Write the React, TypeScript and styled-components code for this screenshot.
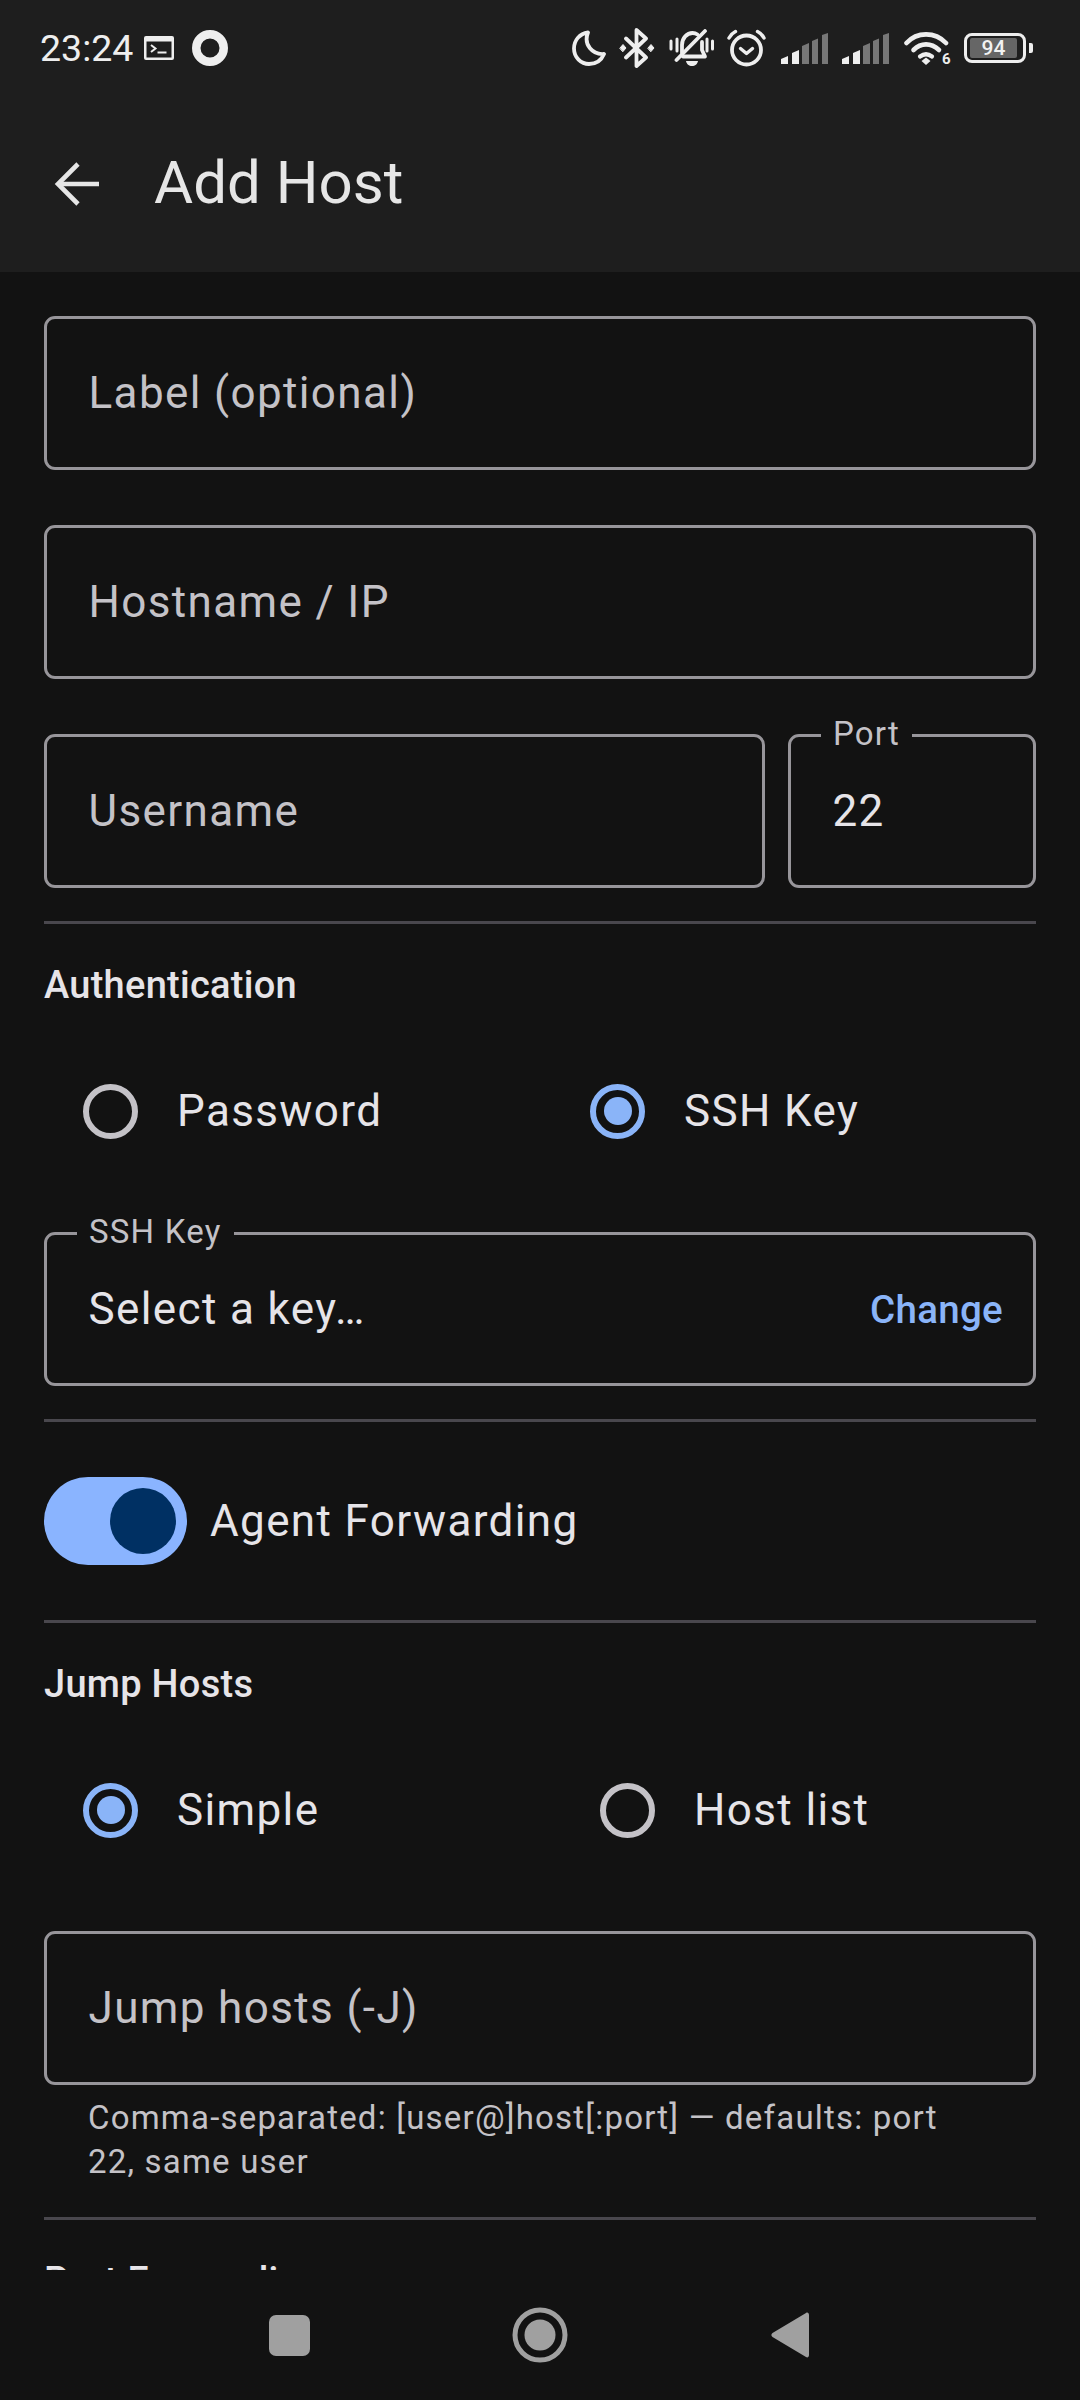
// Add Host screen
import * as React from 'react';
import styled, { createGlobalStyle } from 'styled-components';

const GlobalStyle = createGlobalStyle`
    html, body {
        margin: 0;
        padding: 0;
        background: #121212;
    }
    * {
        box-sizing: border-box;
    }
`

const Screen = styled.div`
    width: 1080px;
    height: 2400px;
    display: flex;
    flex-direction: column;
    background: #121212;
    font-family: Roboto, "Liberation Sans", sans-serif;
    overflow: hidden;
`

const Header = styled.header`
    height: 272px;
    flex: none;
    background: #1e1e1e;
    color: #e6e6e6;
`

const StatusBar = styled.div`
    height: 96px;
    display: flex;
    align-items: center;
    justify-content: space-between;
    padding: 0 47px 0 40px;
`

const StatusLeft = styled.div`
    display: flex;
    align-items: center;
`

const Clock = styled.span`
    font-size: 37.5px;
    color: #eeeeee;
    margin-right: 11px;
`

const StatusRight = styled.div`
    display: flex;
    align-items: center;
    gap: 13.5px;
`

const WifiWrap = styled.span`
    position: relative;
    display: flex;
`

const WifiBadge = styled.span`
    position: absolute;
    right: 0;
    bottom: -1px;
    font-size: 15px;
    line-height: 15px;
    font-weight: 700;
    color: #eeeeee;
`

const Battery = styled.div`
    display: flex;
    align-items: center;
    gap: 3px;
`

const BatteryBody = styled.div`
    width: 62px;
    height: 30px;
    border: 3px solid #eeeeee;
    border-radius: 8px;
    padding: 2px 6px 2px 3px;
    display: flex;
`

const BatteryLevel = styled.div`
    flex: 1;
    background: #666666;
    border-radius: 2px;
    color: #f2f2f2;
    font-size: 21px;
    font-weight: 500;
    line-height: 20px;
    text-align: center;
`

const BatteryTip = styled.div`
    width: 4px;
    height: 10px;
    background: #eeeeee;
    border-radius: 0 2px 2px 0;
`

const Toolbar = styled.div`
    height: 176px;
    display: flex;
    align-items: center;
    padding: 0 0 0 54px;
`

const Title = styled.h1`
    margin: 0 0 0 55px;
    font-size: 60px;
    font-weight: 400;
    color: #e6e6e6;
    position: relative;
    top: -2px;
`

const Form = styled.main`
    flex: 1;
    min-height: 0;
    overflow: hidden;
    padding: 44px 44px 0;
    display: flex;
    flex-direction: column;
`

const Row = styled.div`
    flex: none;
    display: flex;
    gap: 23px;
    margin-top: 55px;
`

const Field = styled.div<{ $mt?: number; $width?: number }>`
    position: relative;
    flex: ${p => (p.$width ? `0 0 ${p.$width}px` : '1 0 154px')};
    width: ${p => (p.$width ? `${p.$width}px` : 'auto')};
    height: 154px;
    margin-top: ${p => p.$mt ?? 0}px;
    border: 3px solid #97959a;
    border-radius: 11px;
    padding: 0 30px 0 41.5px;
    display: flex;
    align-items: center;
    justify-content: space-between;
    font-size: 44px;
    letter-spacing: 1.375px;
`

// the column fields keep their fixed height, only the row ones stretch
const StackField = styled(Field)`
    flex: none;
`

const Placeholder = styled.span`
    color: #c4c2c7;
`

const Value = styled.span`
    color: #e6e4e8;
`

const Legend = styled.span`
    position: absolute;
    top: -22px;
    left: 30px;
    padding: 0 12px;
    background: #121212;
    color: #c4c2c7;
    font-size: 33px;
    line-height: 38px;
    letter-spacing: 1.2px;
`

const ChangeLink = styled.span`
    color: #8ab4f8;
    font-size: 38.5px;
    font-weight: 500;
    letter-spacing: 0.3px;
`

const Divider = styled.hr`
    flex: none;
    width: 100%;
    height: 3px;
    margin: 33px 0;
    border: 0;
    background: #49474d;
`

const SectionTitle = styled.h2`
    flex: none;
    margin: 0;
    height: 55px;
    font-size: 38px;
    line-height: 57px;
    font-weight: 500;
    letter-spacing: 0.28px;
    color: #e6e4e8;
`

const RadioGroup = styled.div<{ $first: number }>`
    flex: none;
    height: 132px;
    margin-top: 33px;
    display: grid;
    grid-template-columns: ${p => p.$first}px 1fr;
`

const RadioItem = styled.label`
    display: flex;
    align-items: center;
    font-size: 44px;
    letter-spacing: 1.375px;
    color: #e6e4e8;
`

const RadioBox = styled.span`
    width: 133px;
    height: 132px;
    flex: none;
    display: flex;
    align-items: center;
    padding-left: 39px;
`

const RadioRing = styled.span<{ $on?: boolean }>`
    width: 55px;
    height: 55px;
    border-radius: 50%;
    border: 6px solid ${p => (p.$on ? '#8ab4f8' : '#c4c2c7')};
    display: flex;
    align-items: center;
    justify-content: center;

    &::after {
        content: '';
        width: 28px;
        height: 28px;
        border-radius: 50%;
        background: ${p => (p.$on ? '#8ab4f8' : 'transparent')};
    }
`

const SwitchRow = styled.div`
    flex: none;
    display: flex;
    align-items: center;
    margin: 22px 0;
    gap: 23px;
    font-size: 44px;
    letter-spacing: 1.375px;
    color: #e6e4e8;
`

const SwitchTrack = styled.span`
    width: 143px;
    height: 88px;
    border-radius: 44px;
    background: #8ab4ff;
    display: flex;
    align-items: center;
    justify-content: flex-end;
    padding-right: 11px;
`

const SwitchThumb = styled.span`
    width: 66px;
    height: 66px;
    border-radius: 50%;
    background: #003063;
`

const Helper = styled.p`
    flex: none;
    margin: 11px 0 0;
    padding: 0 60px 0 44px;
    font-size: 33px;
    line-height: 44px;
    letter-spacing: 1.2px;
    color: #c4c2c7;
`

const NavBar = styled.nav`
    height: 130px;
    flex: none;
    background: #121212;
    display: flex;
    align-items: flex-start;
    justify-content: center;
    padding-top: 38px;
`

const NavSlot = styled.span`
    width: 251px;
    height: 54px;
    display: flex;
    align-items: center;
    justify-content: center;
`

const MoonIcon = () => (
    <svg width="34" height="36" viewBox="0 0 34 36" fill="none">
        <path d="M16 2.500C7.500 3.500 2 10.500 2 18.500 2 27.500 9 34 17 34c7 0 12.500-4 15-10C21 25 11 15 16 2.500z" stroke="#eee" strokeWidth="3.800" strokeLinejoin="round" />
    </svg>
)

const BluetoothIcon = () => (
    <svg width="36" height="40" viewBox="0 0 36 40" fill="none" stroke="#eee" strokeWidth="3.800" strokeLinejoin="round" strokeLinecap="round">
        <path d="M7 10.500l20 19-9.500 8.500V2l9.500 8.500-20 19" />
        <path d="M1 20l3-3.500 3 3.500-3 3.500z" fill="#eee" strokeWidth="1" />
        <path d="M29 20l3-3.500 3 3.500-3 3.500z" fill="#eee" strokeWidth="1" />
    </svg>
)

const BellOffIcon = () => (
    <svg width="45" height="38" viewBox="0 0 45 38" fill="none" stroke="#eee" strokeWidth="3.800" strokeLinecap="round" strokeLinejoin="round">
        <path d="M2 12v8M8 10v12M38 10v12M43.500 12v8" strokeWidth="3" />
        <path d="M13 24v-8c0-7 5-12 10.500-12 2 0 3.500 .5 5 1.500" />
        <path d="M33 13v8l3 6.500H14" />
        <path d="M36 2L7.500 31" />
        <path d="M17 32h12c-.5 3-3 5-6 5s-5.500-2-6-5z" fill="#eee" stroke="none" />
    </svg>
)

const AlarmIcon = () => (
    <svg width="40" height="38" viewBox="0 0 40 38" fill="none" stroke="#eee" strokeLinecap="round" strokeLinejoin="round">
        <circle cx="19.500" cy="21" r="14.500" strokeWidth="3.800" />
        <path d="M13.500 19.500l6 5 6-5" strokeWidth="3.400" />
        <path d="M2 9C3.500 6 5.500 4 8.500 2.500M37 9C35.500 6 33.500 4 30.500 2.500" strokeWidth="3.400" />
    </svg>
)

const SignalIcon = () => (
    <svg width="48" height="31" viewBox="0 0 48 31">
        <path d="M0 26l7-3v8H0z" fill="#eee" />
        <path d="M11 20l7-3v14h-7z" fill="#eee" />
        <path d="M21 13l7-3v21h-7z" fill="#777" />
        <path d="M31 8l6-2.500V31h-6z" fill="#777" />
        <path d="M41 2l6-2v31h-6z" fill="#777" />
    </svg>
)

const WifiIcon = () => (
    <svg width="47" height="36" viewBox="0 0 47 36" fill="none" stroke="#eee" strokeLinecap="round">
        <path d="M2.500 13C13 1.500 31 1.500 42 13" strokeWidth="4.600" />
        <path d="M9.500 20C17 12.500 27 12.500 35 20" strokeWidth="4.600" />
        <path d="M16 26.500c4-3 8-3 12 0" strokeWidth="4.200" />
        <path d="M17.500 31l4.500-3.500 4.500 3.500-4.500 4z" fill="#eee" stroke="none" />
    </svg>
)

const TerminalIcon = () => (
    <svg width="30" height="24" viewBox="0 0 30 24" style={{ marginRight: 18 }}>
        <rect x="0" y="0" width="30" height="24" rx="2" fill="#eee" />
        <rect x="2.500" y="5.500" width="25" height="16" fill="#1e1e1e" />
        <path d="M7 9l4.500 3.500L7 16" stroke="#eee" strokeWidth="2" fill="none" />
        <path d="M13.500 16.500h9" stroke="#eee" strokeWidth="2" />
    </svg>
)

const RingIcon = () => (
    <svg width="36" height="36" viewBox="0 0 36 36" fill="none">
        <circle cx="18" cy="18" r="13.750" stroke="#eee" strokeWidth="8.500" />
    </svg>
)

const BackIcon = () => (
    <svg width="45" height="44" viewBox="0 0 45 44" fill="none" stroke="#e6e6e6" strokeWidth="4.600">
        <path d="M45 22H4" />
        <path d="M24 2L4 22l20 20" />
    </svg>
)

const NavSquare = () => (
    <svg width="41" height="41" viewBox="0 0 41 41">
        <rect width="41" height="41" rx="7" fill="#a0a0a0" />
    </svg>
)

const NavCircle = () => (
    <svg width="56" height="56" viewBox="0 0 56 56" fill="none">
        <circle cx="28" cy="28" r="25" stroke="#a0a0a0" strokeWidth="5" />
        <circle cx="28" cy="28" r="15.500" fill="#a0a0a0" />
    </svg>
)

const NavBack = () => (
    <svg width="41" height="48" viewBox="0 0 41 48">
        <path d="M35 2c1.500-1 3 0 3 2v40c0 2-1.500 3-3 2L1.500 26c-1.500-1-1.500-3 0-4z" fill="#a0a0a0" />
    </svg>
)

const Radio = ({ label, on }: { label: string; on?: boolean }) => (
    <RadioItem>
        <RadioBox><RadioRing $on={on} /></RadioBox>
        {label}
    </RadioItem>
)

export default function App() {
    return (
        <Screen>
            <GlobalStyle />
            <Header>
                <StatusBar>
                    <StatusLeft>
                        <Clock>23:24</Clock>
                        <TerminalIcon />
                        <RingIcon />
                    </StatusLeft>
                    <StatusRight>
                        <MoonIcon />
                        <BluetoothIcon />
                        <BellOffIcon />
                        <AlarmIcon />
                        <SignalIcon />
                        <SignalIcon />
                        <WifiWrap>
                            <WifiIcon />
                            <WifiBadge>6</WifiBadge>
                        </WifiWrap>
                        <Battery>
                            <BatteryBody><BatteryLevel>94</BatteryLevel></BatteryBody>
                            <BatteryTip />
                        </Battery>
                    </StatusRight>
                </StatusBar>
                <Toolbar>
                    <BackIcon />
                    <Title>Add Host</Title>
                </Toolbar>
            </Header>
            <Form>
                <StackField><Placeholder>Label (optional)</Placeholder></StackField>
                <StackField $mt={55}><Placeholder>Hostname / IP</Placeholder></StackField>
                <Row>
                    <Field><Placeholder>Username</Placeholder></Field>
                    <Field $width={248}>
                        <Legend>Port</Legend>
                        <Value>22</Value>
                    </Field>
                </Row>
                <Divider />
                <SectionTitle>Authentication</SectionTitle>
                <RadioGroup $first={507}>
                    <Radio label="Password" />
                    <Radio label="SSH Key" on />
                </RadioGroup>
                <StackField $mt={55}>
                    <Legend>SSH Key</Legend>
                    <Value>Select a key…</Value>
                    <ChangeLink>Change</ChangeLink>
                </StackField>
                <Divider />
                <SwitchRow>
                    <SwitchTrack><SwitchThumb /></SwitchTrack>
                    Agent Forwarding
                </SwitchRow>
                <Divider />
                <SectionTitle>Jump Hosts</SectionTitle>
                <RadioGroup $first={517}>
                    <Radio label="Simple" on />
                    <Radio label="Host list" />
                </RadioGroup>
                <StackField $mt={55}><Placeholder>Jump hosts (-J)</Placeholder></StackField>
                <Helper>Comma-separated: [user@]host[:port] — defaults: port 22, same user</Helper>
                <Divider />
                <SectionTitle>Port Forwarding</SectionTitle>
            </Form>
            <NavBar>
                <NavSlot><NavSquare /></NavSlot>
                <NavSlot><NavCircle /></NavSlot>
                <NavSlot><NavBack /></NavSlot>
            </NavBar>
        </Screen>
    )
}
